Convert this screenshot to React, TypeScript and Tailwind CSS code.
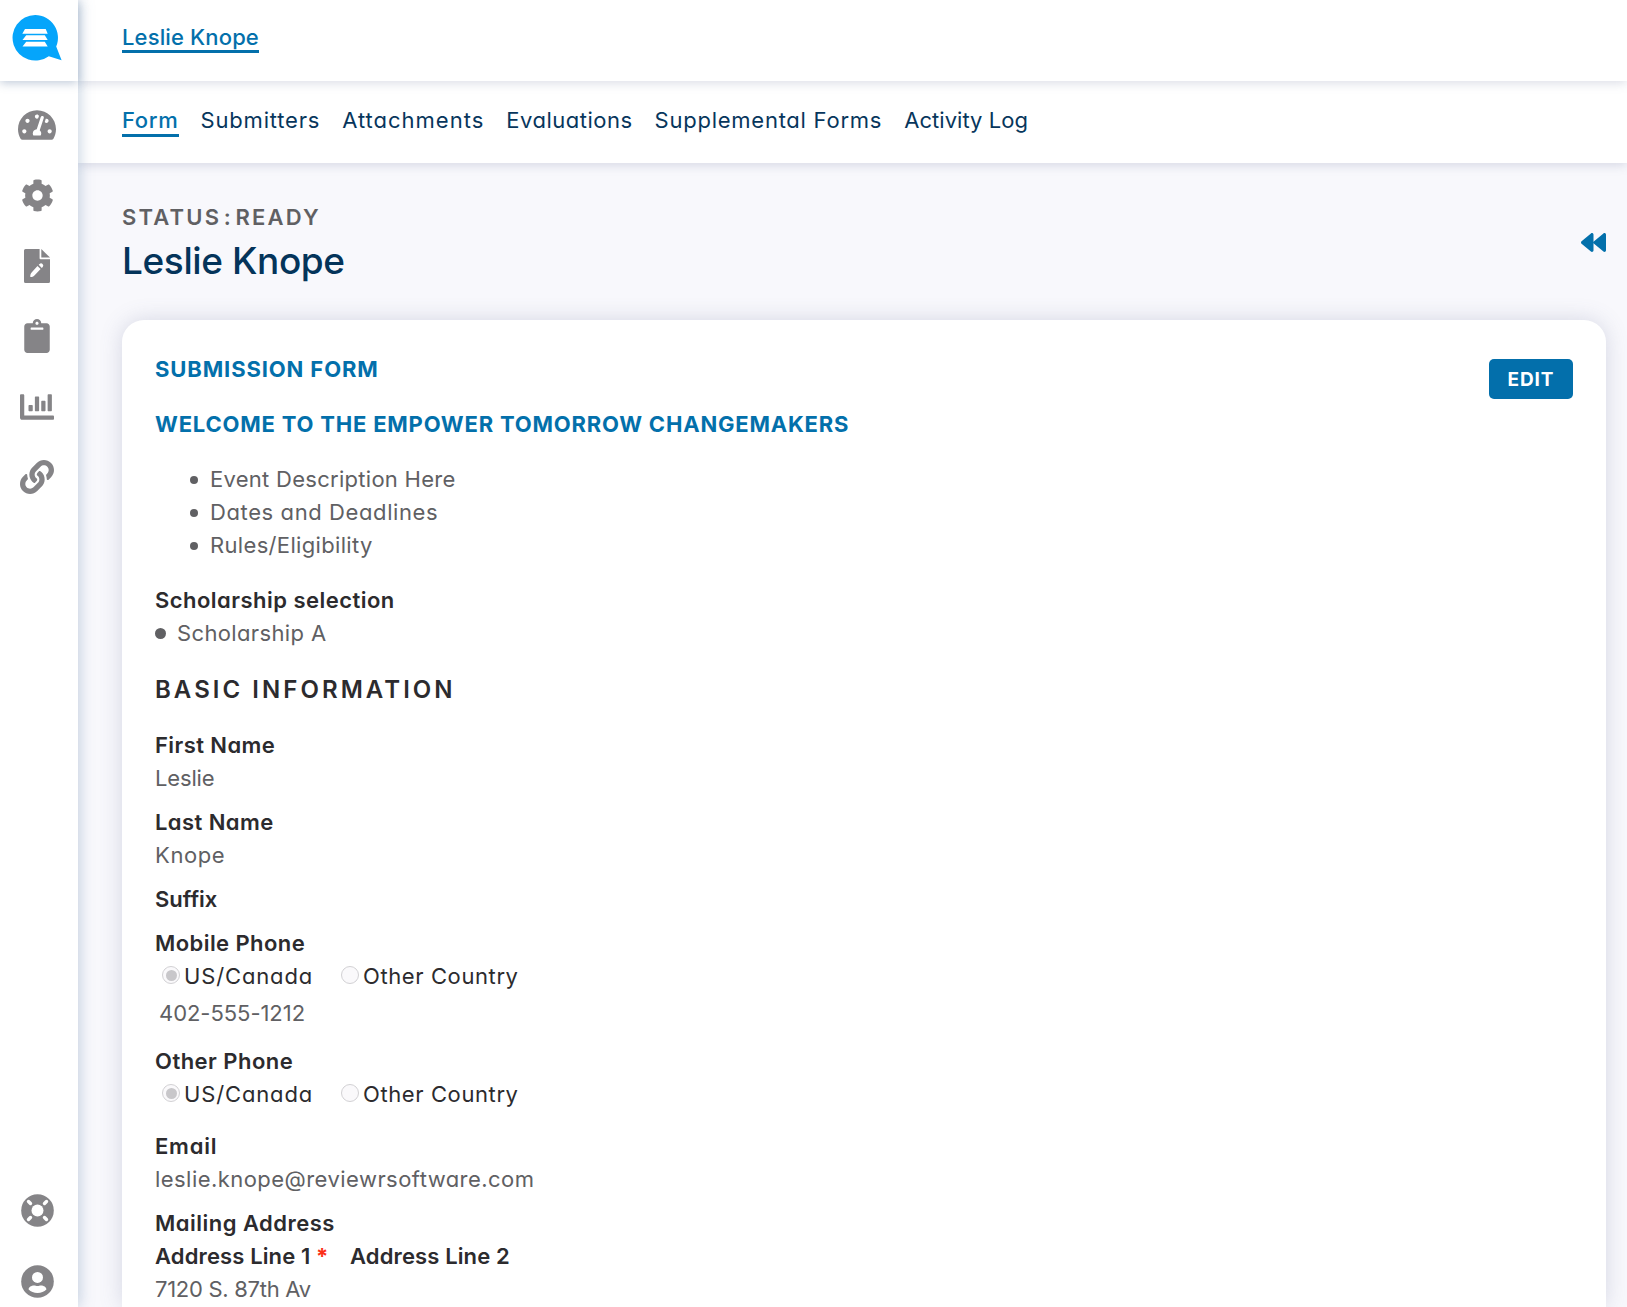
import type { ReactNode } from 'react';
import {
  FaBackward,
  FaChartBar,
  FaClipboard,
  FaCog,
  FaLink,
  FaTachometerAlt,
} from 'react-icons/fa';

const tabs = [
  { label: 'Submitters', tracking: 'tracking-[0.8px]' },
  { label: 'Attachments', tracking: 'tracking-[1px]' },
  { label: 'Evaluations', tracking: 'tracking-[0.5px]' },
  { label: 'Supplemental Forms', tracking: 'tracking-[0.75px]' },
  { label: 'Activity Log', tracking: 'tracking-[0.05px]' },
];

const description = [
  { text: 'Event Description Here', tracking: 'tracking-[0.28px]' },
  { text: 'Dates and Deadlines', tracking: 'tracking-[0.6px]' },
  { text: 'Rules/Eligibility', tracking: 'tracking-[0.33px]' },
];

function Logo() {
  return (
    <svg viewBox="0 0 50 47" className="h-[47px] w-[50px]">
      <path
        d="M23.2 0a22.8 22.8 0 1 0 13.6 41.2L49.6 45.3 44.2 31.6A22.8 22.8 0 0 0 23.2 0Z"
        fill="#05a5fb"
      />
      <path
        d="M13 14h20.7l2 4.7H10.3ZM14.2 20.3h18.6l2.9 4.7H10.5ZM14.2 26.7h18.6l2.9 4.9H10.5Z"
        fill="#fff"
      />
    </svg>
  );
}

function FilePenIcon() {
  return (
    <svg viewBox="0 0 26 34" className="h-[34px] w-[26px]" fill="currentColor">
      <path d="M1.5 0H15.6V9.2a1 1 0 0 0 1 1H26V32.5a1.5 1.5 0 0 1-1.5 1.5h-23A1.5 1.5 0 0 1 0 32.5v-31A1.5 1.5 0 0 1 1.5 0Z" />
      <path d="M17.3 0L26 8.6H17.3Z" />
      <path
        d="M13.5 16.9l3.1 3.1-6.2 6.4c-1.2 1.2-2.6 1.6-4.1 1.5-.1-1.6.2-3.2 1.3-4.3ZM14.7 15.8l.9-.9a2.2 2.2 0 0 1 3.1 3.1l-.9.9Z"
        fill="#fff"
      />
    </svg>
  );
}

function SupportIcon() {
  return (
    <svg viewBox="0 0 33 33" className="size-[33px]">
      <circle cx="16.5" cy="16.5" r="16.3" fill="currentColor" />
      <circle cx="16.5" cy="16.5" r="6" fill="#fff" />
      <path
        d="M7.5 7.5l2 2M25.5 7.5l-2 2M7.5 25.5l2-2M25.5 25.5l-2-2"
        stroke="#fff"
        strokeWidth="3.4"
        strokeLinecap="round"
      />
    </svg>
  );
}

function UserIcon() {
  return (
    <svg viewBox="0 0 33 33" className="size-[33px]">
      <circle cx="16.5" cy="16.5" r="16.3" fill="currentColor" />
      <circle cx="16.5" cy="12.4" r="5.5" fill="#fff" />
      <path
        d="M7.6 24.4c0-2.3 2.6-3.9 5.5-3.9 1.3 0 2 .5 3.4.5s2.1-.5 3.4-.5c2.9 0 5.5 1.6 5.5 3.9-2.2 2.2-5.3 3.5-8.9 3.5s-6.7-1.3-8.9-3.5Z"
        fill="#fff"
      />
    </svg>
  );
}

function Sidebar() {
  return (
    <aside className="relative z-20 flex w-[78px] shrink-0 flex-col bg-white shadow-[1px_0_14px_rgba(90,125,165,0.36)]">
      <div className="flex h-[81px] shrink-0 pt-[15px] pl-3 shadow-[0_2px_9px_rgba(90,115,155,0.38)]">
        <Logo />
      </div>
      <nav className="flex grow flex-col items-center pr-1 text-[#858487]">
        <div className="mt-[26px] flex h-[36px] items-center"><FaTachometerAlt className="h-[34px] w-[38px]" /></div>
        <div className="mt-[34px] flex h-[36px] items-center"><FaCog className="size-[33px]" /></div>
        <div className="mt-[35px] flex h-[36px] items-center"><FilePenIcon /></div>
        <div className="mt-[34px] flex h-[36px] items-center"><FaClipboard className="h-[34px] w-[26px]" /></div>
        <div className="mt-[35px] flex h-[36px] items-center"><FaChartBar className="size-[34px]" /></div>
        <div className="mt-[34px] flex h-[36px] items-center"><FaLink className="size-[34px]" /></div>
        <div className="mt-auto mb-[38px]"><SupportIcon /></div>
        <div className="mb-[9px]"><UserIcon /></div>
      </nav>
    </aside>
  );
}

function Label({ children }: { children: ReactNode }) {
  return <div className="font-semibold text-[#2c2b2e]">{children}</div>;
}

function Radio({ checked, children }: { checked?: boolean; children: ReactNode }) {
  return (
    <span className="flex items-center">
      <span className="mr-1 mb-[3px] flex size-[18px] items-center justify-center rounded-full border border-[#d2d1d4] bg-[#faf9fb]">
        {checked && <span className="size-[11px] rounded-full bg-[#c8c7ca]" />}
      </span>
      {children}
    </span>
  );
}

function CountryChoice() {
  return (
    <div className="flex pl-[7px] text-[#2c2b2e]">
      <div className="w-[179px] tracking-[0.86px]">
        <Radio checked>US/Canada</Radio>
      </div>
      <div className="tracking-[0.6px]">
        <Radio>Other Country</Radio>
      </div>
    </div>
  );
}

export default function App() {
  return (
    <div className="flex h-[1307px] w-[1627px] overflow-hidden bg-[#f8f8fc] font-['Inter',sans-serif] text-[22px] leading-[33px] text-[#606063] [font-feature-settings:'cv11','ss03']">
      <Sidebar />
      <main className="flex min-w-0 grow flex-col">
        <header className="relative z-10 h-[81px] shrink-0 bg-white pt-[21px] pl-11 shadow-[0_2px_10px_rgba(90,100,140,0.22)]">
          <a className="inline-block h-[32px] border-b-[3px] border-[#0370ab] font-medium tracking-[0.14px] text-[#0370ab]">Leslie Knope</a>
        </header>
        <nav className="flex h-[82px] shrink-0 gap-[22px] bg-white pt-[23px] pl-11 text-[#07365c] shadow-[0_2px_10px_rgba(90,100,140,0.22)]">
          <a className="h-[33px] border-b-[3px] border-[#0370ab] font-medium tracking-[0.7px] text-[#0370ab]">Form</a>
          {tabs.map((tab) => (
            <a key={tab.label} className={tab.tracking}>{tab.label}</a>
          ))}
        </nav>

        <div className="flex h-[157px] shrink-0 items-start justify-between pt-[38px] pr-[21px] pl-11">
          <div>
            <p className="h-[33px] font-semibold tracking-[2.2px]">
              STATUS<span className="px-[2.5px]">:</span>READY
            </p>
            <h1 className="text-[37px] leading-[54px] font-medium tracking-[-0.4px] text-[#04345a]">Leslie Knope</h1>
          </div>
          <FaBackward className="mt-[29px] size-[25px] text-[#0370ab]" />
        </div>

        <section className="mr-[21px] ml-11 flex grow justify-between rounded-t-[22px] bg-white px-[33px] pt-[33px] shadow-[0_0_22px_rgba(90,100,140,0.22)]">
          <div>
            <h2 className="font-bold tracking-[0.88px] text-[#0370ab]">SUBMISSION FORM</h2>
            <h2 className="mt-[22px] font-bold tracking-[0.8px] text-[#0370ab]">WELCOME TO THE EMPOWER TOMORROW CHANGEMAKERS</h2>
            <ul className="mt-[22px] pl-[35px]">
              {description.map((item) => (
                <li key={item.text} className="flex items-center gap-[12px]">
                  <span className="size-2 rounded-full bg-current" />
                  <span className={item.tracking}>{item.text}</span>
                </li>
              ))}
            </ul>
            <div className="mt-[22px] tracking-[0.47px]">
              <Label>Scholarship selection</Label>
              <div className="flex items-center gap-[11px] tracking-[0.36px]">
                <span className="size-[11px] rounded-full bg-current" />
                Scholarship A
              </div>
            </div>
            <h3 className="mt-[23px] text-[24px] font-semibold tracking-[3.05px] text-[#2c2b2e]">BASIC INFORMATION</h3>
            <div className="mt-[23px] tracking-[0.42px]">
              <Label>First Name</Label>
              <p className="tracking-[-0.15px]">Leslie</p>
            </div>
            <div className="mt-[11px] tracking-[0.42px]">
              <Label>Last Name</Label>
              <p className="tracking-[0.6px]">Knope</p>
            </div>
            <div className="mt-[11px]">
              <Label>Suffix</Label>
            </div>
            <div className="mt-[11px] tracking-[0.43px]">
              <Label>Mobile Phone</Label>
              <CountryChoice />
              <p className="mt-1 pl-1 tracking-[-0.05px]">402-555-1212</p>
            </div>
            <div className="mt-[15px] tracking-[0.47px]">
              <Label>Other Phone</Label>
              <CountryChoice />
            </div>
            <div className="mt-[19px] tracking-[0.8px]">
              <Label>Email</Label>
              <p className="tracking-[0.45px]">leslie.knope@reviewrsoftware.com</p>
            </div>
            <div className="mt-[11px] tracking-[0.48px]">
              <Label>Mailing Address</Label>
              <div className="flex tracking-[0.13px]">
                <div className="w-[195px]">
                  <Label>Address Line 1 <span className="font-bold text-[#fb3018]">*</span></Label>
                </div>
                <Label>Address Line 2</Label>
              </div>
              <p className="tracking-[-0.28px]">7120 S. 87th Av</p>
            </div>
          </div>
          <button className="mt-[6px] h-10 w-[84px] rounded-[5px] bg-[#036fab] text-[19px] leading-[41px] font-bold tracking-[0.9px] text-white">EDIT</button>
        </section>
      </main>
    </div>
  );
}
